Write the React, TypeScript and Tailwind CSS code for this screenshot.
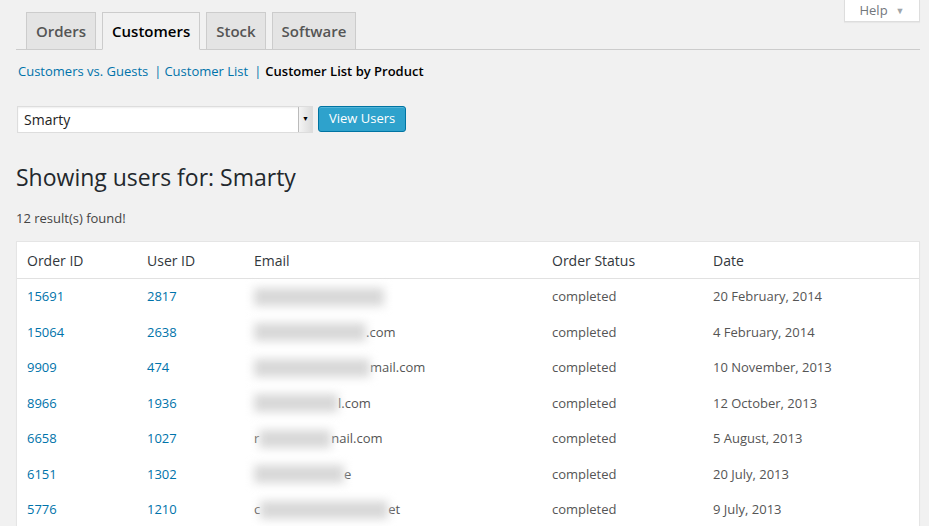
const rows = [
  { order: '15691', user: '2817', lead: '', blur: 130, tail: '', date: '20 February, 2014' },
  { order: '15064', user: '2638', lead: '', blur: 112, tail: '.com', date: '4 February, 2014' },
  { order: '9909', user: '474', lead: '', blur: 116, tail: 'mail.com', date: '10 November, 2013' },
  { order: '8966', user: '1936', lead: '', blur: 84, tail: 'l.com', date: '12 October, 2013' },
  { order: '6658', user: '1027', lead: 'r', blur: 72, tail: 'nail.com', date: '5 August, 2013' },
  { order: '6151', user: '1302', lead: '', blur: 90, tail: 'e', date: '20 July, 2013' },
  { order: '5776', user: '1210', lead: 'c', blur: 128, tail: 'et', date: '9 July, 2013' },
];

const tabs = ['Orders', 'Customers', 'Stock', 'Software'];

export default function App() {
  return (
    <div className="min-h-[526px] bg-[#f1f1f1] text-[#444] overflow-hidden" style={{ fontFamily: '"Open Sans", sans-serif' }}>
      <div className="flex justify-end pr-[9px]">
        <button className="h-[22px] w-[76px] bg-white border border-t-0 border-[#dddddd] shadow-[0_1px_1px_rgba(0,0,0,0.04)] text-[13px] text-[#72777c] flex items-center justify-center gap-[8px]">
          Help <span className="text-[9px] text-[#a0a5aa]">▼</span>
        </button>
      </div>

      <div className="ml-4 mr-[9px] -mt-[10px] border-b border-[#ccc] flex gap-[6px] pl-[10px]">
        {tabs.map((t) => (
          <div
            key={t}
            className={`h-[38px] px-[9px] -mb-px border border-[#ccc] flex items-center text-[15px] font-semibold ${
              t === 'Customers' ? 'bg-[#f1f1f1] text-black border-b-[#f1f1f1]' : 'bg-[#e4e4e4] text-[#555]'
            }`}
          >
            {t}
          </div>
        ))}
      </div>

      <div className="ml-[18px] mt-[12px] text-[13px] flex items-center">
        <a className="text-[#0073aa]">Customers vs. Guests</a>
        <span className="text-[#0073aa] ml-[6px] mr-[3px]">|</span>
        <a className="text-[#0073aa]">Customer List</a>
        <span className="text-[#0073aa] ml-[6px] mr-[4px]">|</span>
        <span className="text-black font-semibold">Customer List by Product</span>
      </div>

      <div className="ml-[17px] mt-[24px] flex items-center gap-[5px]">
        <div className="w-[296px] h-[27px] bg-white border border-[#ddd] shadow-[inset_0_1px_2px_rgba(0,0,0,0.07)] flex items-center">
          <span className="flex-1 pl-[6px] text-[14px] text-[#222]">Smarty</span>
          <span className="w-[14px] h-[25px] bg-gradient-to-r from-[#f4f4f4] to-[#dcdcdc] border-l border-[#bbb] flex items-center justify-center text-[7px] text-black">▼</span>
        </div>
        <button className="h-[26px] px-[10px] rounded-[3px] bg-[#2ea2cc] border border-[#0074a2] text-white text-[13px] shadow-[inset_0_1px_0_rgba(120,200,230,0.5)]">
          View Users
        </button>
      </div>

      <h1 className="ml-4 mt-[29px] text-[23px] leading-[30px] text-[#23282d]">Showing users for: Smarty</h1>

      <p className="ml-4 mt-[17px] text-[13px] text-[#444]">12 result(s) found!</p>

      <div className="ml-4 mr-[9px] mt-[13px] bg-white border border-[#e5e5e5] shadow-[0_1px_1px_rgba(0,0,0,0.04)]">
        <div className="grid grid-cols-[130px_107px_298px_161px_1fr] h-[37px] items-center border-b border-[#e1e1e1] text-[14px] text-[#32373c]">
          <div className="pl-[10px]">Order ID</div>
          <div>User ID</div>
          <div>Email</div>
          <div>Order Status</div>
          <div>Date</div>
        </div>
        {rows.map((r) => (
          <div key={r.order} className="grid grid-cols-[130px_107px_298px_161px_1fr] h-[35.5px] items-center text-[13px] text-[#555]">
            <div className="pl-[10px] text-[#0073aa]">{r.order}</div>
            <div className="text-[#0073aa]">{r.user}</div>
            <div className="flex items-center">
              {r.lead && <span>{r.lead}</span>}
              <span className="inline-block h-[18px] bg-[#d8d8d8] blur-[5px]" style={{ width: r.blur }} />
              {r.tail && <span>{r.tail}</span>}
            </div>
            <div>completed</div>
            <div>{r.date}</div>
          </div>
        ))}
      </div>
    </div>
  );
}
